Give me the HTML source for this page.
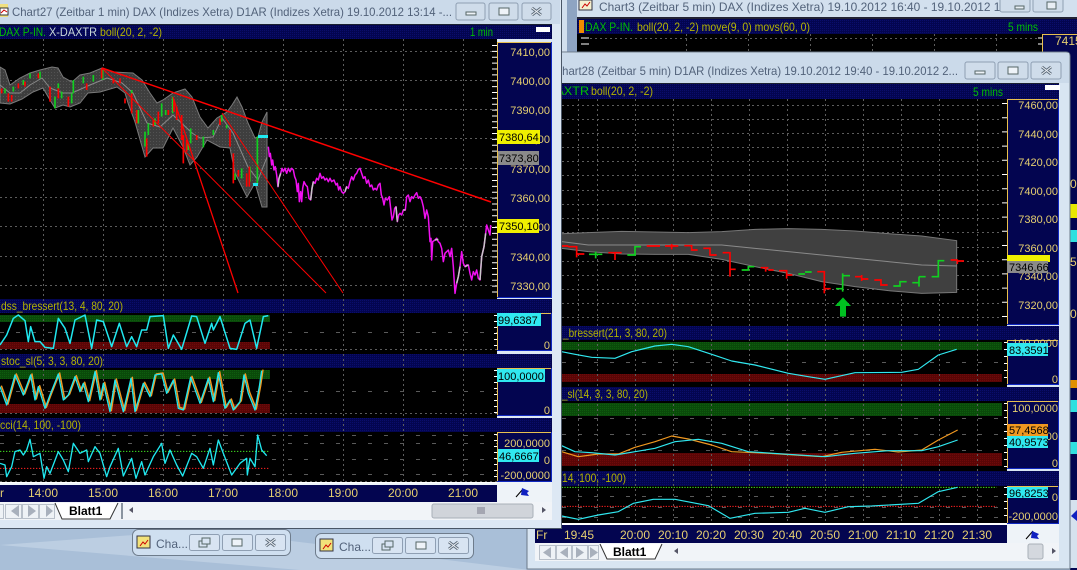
<!DOCTYPE html>
<html lang="de"><head><meta charset="utf-8"><title>Charts</title>
<style>
html,body{margin:0;padding:0;background:#a9bfd8;width:1077px;height:570px;overflow:hidden}
svg{display:block;font-family:"Liberation Sans",sans-serif}
.ax{fill:#e6cf70;font-size:11px;text-anchor:end}
.tm{fill:#e6cf70;font-size:12px;text-anchor:middle}
.bl{fill:#b4b400;font-size:12px}
.gr{fill:#00c000;font-size:12px}
.k{fill:#000;font-size:11px}
.b{fill:#000;font-size:12px;font-weight:700}
.ti{fill:#52627a;font-size:12px}
.g{stroke:#5c5c5c;stroke-dasharray:2 3;fill:none}
.d{stroke:#5a5a5a;stroke-dasharray:4 12;fill:none}
.ln{fill:none;stroke-linejoin:round}
.nb{fill:#d8e4f2;stroke:#8f9fb3}
.x{stroke:#5d6b7a;stroke-width:3;fill:none}
.x2{stroke:#eef3f8;stroke-width:1;fill:none}
</style></head><body>
<svg width="1077" height="570" viewBox="0 0 1077 570" xmlns="http://www.w3.org/2000/svg">
<defs>
<pattern id="nv" width="2" height="2" patternUnits="userSpaceOnUse"><rect width="2" height="2" fill="#030550"/><rect width="1" height="1" fill="#0a0d6c"/></pattern>
<pattern id="gb" width="2" height="2" patternUnits="userSpaceOnUse"><rect width="2" height="2" fill="#0a4a0a"/><rect width="1" height="1" fill="#0e5c0e"/></pattern>
<pattern id="rb" width="2" height="2" patternUnits="userSpaceOnUse"><rect width="2" height="2" fill="#5a0606"/><rect width="1" height="1" fill="#6e0a0a"/></pattern>
<pattern id="bd" width="3" height="3" patternUnits="userSpaceOnUse"><rect width="3" height="3" fill="#3e3e3e"/><rect width="1" height="1" fill="#525252"/></pattern>
</defs>

<!-- desktop -->
<rect width="1077" height="570" fill="#a9bfd8"/>
<path d="M0 545 L200 530 L530 570 L300 570Z" fill="#bccee2"/>

<!-- Chart3 behind -->
<rect x="562" y="0" width="515" height="52" fill="#d3e0ee"/>
<rect x="567" y="0" width="10" height="60" fill="#8ea4c2"/>
<text x="599" y="11" class="ti" textLength="418" lengthAdjust="spacingAndGlyphs">Chart3 (Zeitbar 5 min)  DAX (Indizes Xetra) 19.10.2012 16:40 - 19.10.2012 17...</text>
<rect x="579" y="0" width="13" height="10" fill="#f4f0d0" stroke="#334"/>
<path d="M582 8l3-4 2 2 3-4" stroke="#c00" fill="none"/>
<rect x="1000" y="-5" width="30" height="17" rx="2" fill="#cfdcea" stroke="#8f9fb3"/>
<rect x="1033" y="-5" width="30" height="17" rx="2" fill="#cfdcea" stroke="#8f9fb3"/>
<rect x="1015" y="6" width="9" height="3" fill="#e8eef4" stroke="#566"/>
<rect x="1047" y="2" width="9" height="7" fill="#e8eef4" stroke="#566"/>
<rect x="577" y="17" width="500" height="2" fill="#223"/>
<rect x="577" y="19" width="500" height="15" fill="url(#nv)"/>
<rect x="579" y="20" width="5" height="13" fill="#f08c00"/>
<text x="585" y="31" class="gr" textLength="48" lengthAdjust="spacingAndGlyphs">DAX P-IN.</text>
<text x="637" y="31" class="bl" textLength="173" lengthAdjust="spacingAndGlyphs">boll(20, 2, -2) move(9, 0) movs(60, 0)</text>
<text x="1008" y="31" class="gr" textLength="30" lengthAdjust="spacingAndGlyphs">5 mins</text>
<rect x="577" y="34" width="465" height="18" fill="#000"/>
<path d="M581 38h8M581 44h8M1038 38h4M1038 44h4" stroke="#fff"/>
<path class="g" d="M686.500 34v18M748.500 34v18M810.500 34v18M872.500 34v18M934.500 34v18M996.500 34v18"/>
<path class="g" d="M590 38.500h450"/>
<rect x="1042" y="34" width="35" height="20" fill="#030550"/>
<path d="M1042.500 52V34.500H1077" stroke="#e8c050" fill="none"/>
<text x="1055" y="45" fill="#e6cf70" font-size="12">7415</text>
<!-- chart3 visible strip at right -->
<rect x="1070" y="52" width="7" height="518" fill="#030550"/>
<text x="1070" y="188" fill="#e6cf70" font-size="12">0</text>
<rect x="1070" y="204" width="7" height="14" fill="#e8e800"/>
<text x="1070" y="266" fill="#e6cf70" font-size="12">5</text>
<rect x="1070" y="230" width="7" height="12" fill="#30e0e0"/>
<text x="1070" y="318" fill="#e6cf70" font-size="12">0</text>
<rect x="1070" y="380" width="7" height="8" fill="#e09000"/>
<rect x="1070" y="400" width="7" height="12" fill="#30e0e0"/>
<rect x="1070" y="442" width="7" height="12" fill="#30e0e0"/>
<rect x="1070" y="500" width="7" height="68" fill="#d6e2ee"/>
<path d="M1077 510l-6 6 6 5z" fill="#1020c0"/>

<!-- Chart28 window -->
<path d="M527 569V56q0-4 4-4H1066q4 0 4 4V569Z" fill="#d8e5f2" stroke="#6c7a8a" stroke-width="1"/>
<rect x="528" y="53" width="541" height="30" fill="#cbdaea"/>
<text x="554" y="75" class="ti" textLength="404" lengthAdjust="spacingAndGlyphs">Chart28 (Zeitbar 5 min)  D1AR (Indizes Xetra) 19.10.2012 19:40 - 19.10.2012 2...</text>
<g fill="#cfdcea" stroke="#8f9fb3">
<rect x="965" y="62" width="30" height="17" rx="2"/>
<rect x="998" y="62" width="30" height="17" rx="2"/>
<rect x="1031" y="62" width="30" height="17" rx="2"/>
</g>
<rect x="975" y="71" width="10" height="3" fill="#eef3f8" stroke="#566"/>
<rect x="1008" y="67" width="10" height="7" fill="#eef3f8" stroke="#566"/>
<path class="x" d="M1042 67l9 7m0-7l-9 7"/><path class="x2" d="M1042 67l9 7m0-7l-9 7"/>
<rect x="535" y="83" width="524" height="1" fill="#1a2030"/>
<rect x="535" y="84" width="524" height="15" fill="url(#nv)"/>
<rect x="1045" y="85" width="15" height="5" fill="#fff"/>
<text x="534" y="95" class="gr" textLength="55" lengthAdjust="spacingAndGlyphs">X-DAXTR</text>
<text x="591" y="95" class="bl" textLength="62" lengthAdjust="spacingAndGlyphs">boll(20, 2, -2)</text>
<text x="973" y="96" class="gr" textLength="30" lengthAdjust="spacingAndGlyphs">5 mins</text>
<rect x="535" y="99" width="472" height="227" fill="#000"/>
<!-- panels -->
<rect x="535" y="326" width="524" height="14" fill="url(#nv)"/>
<rect x="535" y="340" width="472" height="47" fill="#000"/>
<rect x="535" y="387" width="524" height="14" fill="url(#nv)"/>
<rect x="535" y="401" width="472" height="70" fill="#000"/>
<rect x="535" y="471" width="524" height="15" fill="url(#nv)"/>
<rect x="535" y="486" width="472" height="37" fill="#000"/>
<rect x="562" y="342" width="440" height="8" fill="url(#gb)"/>
<rect x="562" y="374" width="440" height="8" fill="url(#rb)"/>
<rect x="562" y="403" width="440" height="13" fill="url(#gb)"/>
<rect x="562" y="453" width="440" height="13" fill="url(#rb)"/>
<path class="g" d="M578.500 99v424M597.500 99v424M635.500 99v424M673.500 99v424M711.500 99v424M749.500 99v424M787.500 99v424M825.500 99v424M863.500 99v424M901.500 99v424M939.500 99v424M977.500 99v424"/>
<path class="g" d="M562 105.500h440M562 119.500h440M562 133.500h440M562 147.500h440M562 161.500h440M562 175.500h440M562 190.500h440M562 204.500h440M562 218.500h440M562 232.500h440M562 247.500h440M562 261.500h440M562 275.500h440M562 289.500h440M562 303.500h440M562 317.500h440"/>
<path class="d" d="M562 362.500h440M562 418.500h440M562 434.500h440M562 450.500h440M562 496.500h440M562 507.500h440M562 517.500h440"/>
<!-- right axis ticks -->
<line x1="1004.500" x2="1004.500" y1="103" y2="322" stroke="#fff" stroke-width="5" stroke-dasharray="1 13.200"/>
<line x1="1005.500" x2="1005.500" y1="342" y2="382" stroke="#fff" stroke-width="3" stroke-dasharray="1 6"/>
<line x1="1005.500" x2="1005.500" y1="403" y2="467" stroke="#fff" stroke-width="3" stroke-dasharray="1 6"/>
<line x1="1005.500" x2="1005.500" y1="487" y2="522" stroke="#fff" stroke-width="3" stroke-dasharray="1 6"/>
<!-- bollinger -->
<g transform="translate(555 220) scale(.33333)">
<path d="M0 42L100 38 200 34 300 36 400 38 500 35 600 28 700 26 800 28 900 33 1000 41 1100 48 1205 62V217L1100 220 1000 212 900 200 800 185 700 160 600 140 500 118 400 103 300 103 200 102 100 95 20 85 0 80Z" fill="url(#bd)" stroke="#777" stroke-width="3"/>
<polyline class="ln" stroke="#8a8a8a" stroke-width="3" points="20,65 100,75 300,75 500,75 600,85 800,105 1000,125 1100,135 1205,138"/>
<path fill="none" stroke="#ff0000" stroke-width="5" d="M20 78h20M40 80h25V112M65 102h23M160 98h40M180 98v22M275 78h40M330 78h40M350 72v16M388 77h22v13h18M445 85h20v20h20M503 98h22v72M525 148h17M617 143h23M632 143v12M640 150h16M672 152h23v24M695 165h17M787 155h21v65M808 206h19M900 170h20M920 165v18M920 177h20M958 180h20v15h20M1187 120h20M1207 118v14M1207 123h20"/>
<path fill="none" stroke="#10d020" stroke-width="5" d="M102 103h40M122 95v20M217 105h23V80h18M560 150h20V140h18M730 162h20M750 156h20M843 206h20M863 160v55M863 167h22M1015 198h20V185h20M1072 188h20M1092 170v30M1092 170h20M1130 170h20V122h18"/>
<path d="M864 232l24 26h-15v32h-18v-32h-15z" fill="#00c020"/>
<polyline class="ln" stroke="#30e8f0" stroke-width="3.500" points="20,395 60,403 110,412 180,415 230,395 300,378 350,373 400,380 470,403 530,423 600,435 700,460 760,470 810,478 900,458 1040,457 1090,448 1150,405 1205,388"/>
</g>
<g transform="translate(555 390) scale(.33333)">
<polyline class="ln" stroke="#f09820" stroke-width="3.500" points="20,185 70,200 130,192 190,192 240,172 300,155 350,138 400,147 470,165 530,185 640,190 720,195 800,200 860,187 960,178 1030,186 1100,180 1150,150 1208,120"/>
<polyline class="ln" stroke="#30e8f0" stroke-width="3.500" points="20,167 60,185 110,188 180,195 240,185 300,175 360,155 430,148 500,160 580,185 700,193 810,200 900,190 1000,182 1100,182 1150,170 1208,150"/>
<path d="M20 292H1325" stroke="#40e020" stroke-width="3" stroke-dasharray="4 4"/>
<path d="M20 349H1325" stroke="#ff2020" stroke-width="3" stroke-dasharray="4 4"/>
<polyline class="ln" stroke="#30e8f0" stroke-width="3.500" points="20,378 70,388 130,375 190,365 235,340 295,328 360,328 460,347 525,385 600,370 700,367 750,355 810,367 880,350 950,348 1090,340 1150,305 1208,292"/>
</g>
<!-- axis boxes -->
<g fill="#030550" stroke="#1028c0">
<rect x="1007.500" y="99.500" width="51" height="225"/>
<rect x="1007.500" y="340.500" width="51" height="44"/>
<rect x="1007.500" y="401.500" width="51" height="67"/>
<rect x="1007.500" y="486.500" width="51" height="37"/>
</g>
<path d="M1007.500 324V99.500H1058M1007.500 384V340.500H1058M1007.500 468V401.500H1058M1007.500 523V486.500H1058" stroke="#e8c050" fill="none"/>
<text x="1058" y="109" class="ax">7460,00</text>
<text x="1058" y="138" class="ax">7440,00</text>
<text x="1058" y="166" class="ax">7420,00</text>
<text x="1058" y="195" class="ax">7400,00</text>
<text x="1058" y="223" class="ax">7380,00</text>
<text x="1058" y="252" class="ax">7360,00</text>
<text x="1058" y="280" class="ax">7340,00</text>
<text x="1058" y="309" class="ax">7320,00</text>
<rect x="1007" y="255" width="43" height="7" fill="#f0f000"/>
<rect x="1007" y="261" width="41" height="12" fill="#8a8a8a"/>
<text x="1009" y="271" class="k">7346,66</text>
<text x="1058" y="347" class="ax">100,0000</text>
<rect x="1007" y="343" width="41" height="13" fill="#30e8f0"/>
<text x="1009" y="354" class="k">83,3591</text>
<text x="1058" y="383" class="ax">0</text>
<text x="1058" y="412" class="ax">100,0000</text>
<text x="1058" y="440" class="ax">50,0000</text>
<rect x="1007" y="424" width="41" height="12" fill="#f09820"/>
<text x="1009" y="434" class="k">57,4568</text>
<rect x="1007" y="436" width="41" height="12" fill="#30e8f0"/>
<text x="1009" y="446" class="k">40,9573</text>
<text x="1058" y="467" class="ax">0</text>
<text x="1058" y="501" class="ax">0</text>
<text x="1058" y="520" class="ax">-200,0000</text>
<rect x="1007" y="487" width="41" height="11" fill="#30e8f0"/>
<text x="1009" y="497" class="k">96,8253</text>
<text x="563" y="337" class="bl" textLength="104" lengthAdjust="spacingAndGlyphs">_bressert(21, 3, 80, 20)</text>
<text x="562" y="398" class="bl" textLength="86" lengthAdjust="spacingAndGlyphs">_sl(14, 3, 3, 80, 20)</text>
<text x="562" y="482" class="bl" textLength="64" lengthAdjust="spacingAndGlyphs">14, 100, -100)</text>
<!-- time bar -->
<rect x="535" y="523" width="472" height="2" fill="#fff"/>
<rect x="535" y="525" width="472" height="18" fill="#030550"/>
<rect x="1007" y="524" width="52" height="19" fill="#eef3f8"/>
<path d="M1026 539l7-8" stroke="#000"/><path d="M1032 531l7 3-2 2 2 3-8-1z" fill="#1020c0"/>
<text x="536" y="539" fill="#e6cf70" font-size="12">Fr</text>
<g><text class="tm" x="579" y="539">19:45</text><text class="tm" x="635" y="539">20:00</text><text class="tm" x="673" y="539">20:10</text><text class="tm" x="711" y="539">20:20</text><text class="tm" x="749" y="539">20:30</text><text class="tm" x="787" y="539">20:40</text><text class="tm" x="825" y="539">20:50</text><text class="tm" x="863" y="539">21:00</text><text class="tm" x="901" y="539">21:10</text><text class="tm" x="939" y="539">21:20</text><text class="tm" x="977" y="539">21:30</text></g>
<!-- tab row -->
<rect x="535" y="543" width="524" height="18" fill="#f1f4f8"/>
<g fill="#eef2f6" stroke="#b8c0ca"><rect x="539.500" y="545.500" width="16" height="14"/><rect x="556.500" y="545.500" width="15" height="14"/><rect x="572.500" y="545.500" width="15" height="14"/><rect x="588.500" y="545.500" width="10" height="14"/></g>
<g fill="#a8b0bc">
<path d="M551 547v11l-8-5.500zM568 547v11l-8-5.500zM576 547l8 5.500-8 5.500zM590 547l8 5.500-8 5.500z" />
</g>
<path d="M600 544l7 15h48l7-15" fill="#fff" stroke="#333"/>
<text x="613" y="556" class="b">Blatt1</text>
<path d="M678 548v6l-4-3z" fill="#556"/><path d="M1052 548v6l4-3z" fill="#556"/>
<rect x="1028" y="544" width="15" height="15" rx="2" fill="#d4d8de" stroke="#a9b0b8"/>

<!-- Left window -->
<rect x="0" y="0" width="562" height="529" fill="#dde8f4"/>
<path d="M561.500 0V528.500H0" stroke="#4a5666" fill="none"/>
<rect x="0" y="0" width="560" height="24" fill="#cbdaea"/>
<rect x="0" y="4" width="8" height="13" fill="#f0e080"/><rect x="0" y="8" width="8" height="7" fill="#fff" stroke="#333"/><path d="M1 13l3-3 3 2" stroke="#c00" fill="none"/>
<text x="12" y="16" class="ti" textLength="440" lengthAdjust="spacingAndGlyphs">Chart27 (Zeitbar 1 min)  DAX (Indizes Xetra) D1AR (Indizes Xetra) 19.10.2012 13:14 -...</text>
<g fill="#cfdcea" stroke="#8f9fb3">
<rect x="456" y="3" width="29" height="17" rx="2"/>
<rect x="489" y="3" width="29" height="17" rx="2"/>
<rect x="522" y="3" width="29" height="17" rx="2"/>
</g>
<rect x="466" y="12" width="10" height="3" fill="#eef3f8" stroke="#566"/>
<rect x="499" y="8" width="10" height="7" fill="#eef3f8" stroke="#566"/>
<path class="x" d="M532 8l9 7m0-7l-9 7"/><path class="x2" d="M532 8l9 7m0-7l-9 7"/>
<rect x="0" y="24" width="552" height="1" fill="#1a2030"/>
<rect x="0" y="25" width="552" height="14" fill="url(#nv)"/>
<rect x="536" y="27" width="14" height="5" fill="#fff"/>
<text x="-1" y="36" class="gr" textLength="47" lengthAdjust="spacingAndGlyphs">DAX P-IN.</text>
<text x="49" y="36" fill="#c8d8d8" font-size="12" textLength="48" lengthAdjust="spacingAndGlyphs">X-DAXTR</text>
<text x="100" y="36" class="bl" textLength="62" lengthAdjust="spacingAndGlyphs">boll(20, 2, -2)</text>
<text x="470" y="36" class="gr" textLength="23" lengthAdjust="spacingAndGlyphs">1 min</text>
<rect x="0" y="39" width="497" height="260" fill="#000"/>
<rect x="0" y="299" width="552" height="14" fill="url(#nv)"/>
<rect x="0" y="313" width="497" height="41" fill="#000"/>
<rect x="0" y="354" width="552" height="14" fill="url(#nv)"/>
<rect x="0" y="368" width="497" height="50" fill="#000"/>
<rect x="0" y="418" width="552" height="14" fill="url(#nv)"/>
<rect x="0" y="432" width="497" height="51" fill="#000"/>
<rect x="0" y="315" width="270" height="7" fill="url(#gb)"/>
<rect x="0" y="342" width="270" height="7" fill="url(#rb)"/>
<rect x="0" y="370" width="270" height="9" fill="url(#gb)"/>
<rect x="0" y="404" width="270" height="9" fill="url(#rb)"/>
<path class="g" d="M43.500 39v444M103.500 39v444M163.500 39v444M223.500 39v444M283.500 39v444M343.500 39v444M403.500 39v444M463.500 39v444"/>
<path class="g" d="M0 51.500h497M0 80.500h497M0 109.500h497M0 138.500h497M0 168.500h497M0 197.500h497M0 226.500h497M0 256.500h497M0 285.500h497"/>
<path class="g" d="M0 349.500h497M0 413.500h497M0 481.500h497"/>
<path class="d" d="M0 332.500h497M0 391.500h497M0 435.500h497M0 443.500h497M0 459.500h497M0 474.500h497"/>
<!-- main band -->
<path d="M0 67L5 70 10 85 20 78 30 73 40 70 52 67 58 68 63 77 72 82 80 75 90 73 102 68 113 72 133 73 142 80 150 93 157 103 163 100 173 93 185 89 192 97 200 117 208 128 217 118 227 112 232 105 237 97 242 107 248 123 255 138 258 137 262 122 267 112V207H262L255 183 247 197 235 173 230 148 220 147 207 140 197 157 190 165 183 147 173 128 163 148 153 148 145 157 135 122 128 103 125 93 117 87 100 92 88 93 80 103 70 107 63 105 55 108 50 100 43 88 33 92 22 99 10 104 0 103Z" fill="url(#bd)" stroke="#7a7a7a"/>
<polyline class="ln" stroke="#8a8a8a" points="0,85 10,93 20,93 30,85 42,78 50,88 63,93 72,93 90,85 107,78 122,83 133,93 147,123 160,127 173,115 192,133 200,138 213,137 222,118 233,133 248,167 258,180 267,157"/>
<g transform="translate(0 60) scale(.33333)" fill="none" stroke-width="5">
<path stroke="#10d020" d="M15 85V100M40 80V95M70 60V75M90 40V55M120 35V55M165 110V145M185 95V115M175 70V95M215 100V130M220 60V100M250 50V70M280 45V65M308 30V60M395 90V125M415 150V190M435 215V260M445 190V225M465 175V195M485 130V170M497 150V165M518 110V160M565 250V270M572 205V250M610 230V240M640 210V225M610 240V262M665 165V185M680 195V205M705 340V360M725 325V355M750 320V365M772 230V370"/>
<path stroke="#f00" d="M5 85V100M25 100V125M35 105V125M55 70V85M75 65V80M115 40V55M150 80V125M175 85V115M205 110V140M260 70V90M305 25V55M340 55V70M360 55V70M375 115V130M395 100V160M410 150V190M440 235V290M460 180V200M475 155V190M505 150V165M522 120V155M530 140V180M545 165V240M550 225V310M560 240V275M590 225V240M660 175V195M690 210V260M700 280V370M715 330V350M740 340V380M748 320V380"/>
</g>
<g fill="none" stroke="#f00">
<path d="M102 68L491 202" stroke-width="1.500"/>
<path d="M102 68L326 293"/>
<path d="M173 97L238 293" stroke-width="1.300"/>
<path d="M222 113L343 293"/>
</g>
<rect x="258" y="135" width="10" height="3" fill="#20e8f0"/>
<rect x="253" y="183" width="5" height="3" fill="#20e8f0"/>
<!-- price line -->
<g transform="translate(260 120) scale(.33333)" class="ln">
<polyline stroke="#f010f0" stroke-width="4.500" points="25,80 28,110 31,100 35,135 38,120 42,150 46,140 50,165 54,200 57,175 62,160 66,145 70,155 75,145 80,160 85,145 90,155 95,145 100,150 104,170 108,180 112,215 115,190 118,245 122,215 125,245 128,205 132,185 137,195 142,200 147,235 152,240 156,205 160,185 165,190 170,175 175,180 180,160 185,175 190,170 195,180 200,175 205,185 210,175 215,185 222,180 228,195 232,190 236,210 240,200 245,215 250,220 255,215 260,200 265,205 270,185 275,170 280,180 285,165 290,160 295,148 300,145 305,160 310,175 315,170 320,190 325,180 330,200 335,195 340,210 345,205 350,210 355,195 360,190 364,225 368,235 372,255 376,235 382,240 388,230 392,265 396,300 400,290 404,265 408,260 412,305 416,285 420,280 425,285 430,270 436,270 440,230 445,225 450,245 455,230 460,235 465,225 470,218 475,235 480,230 485,240 490,260 495,295 500,270 505,290 510,365 513,355 515,420 518,365 525,360 530,355 535,365 540,370 545,385 550,425 555,400 560,395 565,390 570,410 575,385 580,440 585,520 590,490 595,470 600,440 605,395 610,430 615,440 620,435 625,435 630,460 635,480 640,455 645,465 650,450 655,475 660,480 665,410 672,380 677,340 680,315 685,330 690,345 692,315"/>
<path stroke="#c8c8c8" stroke-width="4.500" d="M54 200L57 175 62 160M152 240L156 205 160 185M408 260L412 305M430 270L436 270M590 490L595 470 600 440M615 440L625 435M660 480L665 410 672 380 677 340M525 360L535 358M255 215L260 200"/>
</g>
<!-- osc lines -->
<polyline class="ln" transform="translate(0 160) scale(.33333)" stroke="#20e8f0" stroke-width="4.500" points="0,555 20,525 30,500 40,475 55,465 75,482 85,545 92,500 105,545 120,545 135,562 160,565 175,475 195,505 210,550 225,480 255,465 275,565 290,480 310,485 335,560 358,490 380,560 395,530 410,560 425,510 440,510 450,470 490,467 505,565 520,525 545,568 575,468 590,470 615,550 635,490 640,510 660,470 690,565 710,568 735,490 750,480 770,565 790,470 805,467"/>
<g transform="translate(0 350) scale(.33333)" class="ln">
<polyline transform="translate(4 -3)" stroke="#f09820" stroke-width="4.500" points="0,110 20,165 45,75 70,135 92,75 105,150 115,110 135,175 150,135 175,72 190,150 205,135 225,80 240,125 250,100 265,155 285,65 300,150 310,100 330,185 345,90 370,185 393,85 405,185 430,100 450,140 465,75 485,72 500,130 520,90 535,175 550,180 572,82 600,160 625,85 640,155 655,68 675,175 690,150 700,180 720,155 732,75 745,130 765,180 778,110 785,62"/>
<polyline stroke="#20e8f0" stroke-width="4" points="0,110 20,165 45,75 70,135 92,75 105,150 115,110 135,175 150,135 175,72 190,150 205,135 225,80 240,125 250,100 265,155 285,65 300,150 310,100 330,185 345,90 370,185 393,85 405,185 430,100 450,140 465,75 485,72 500,130 520,90 535,175 550,180 572,82 600,160 625,85 640,155 655,68 675,175 690,150 700,180 720,155 732,75 745,130 765,180 778,110 785,62"/>
<path d="M0 304H810" stroke="#40e020" stroke-width="3" stroke-dasharray="4 5"/>
<path d="M0 355H810" stroke="#ff2020" stroke-width="3" stroke-dasharray="4 5"/>
<polyline stroke="#20e8f0" stroke-width="4" points="0,340 15,345 20,380 35,350 45,305 60,300 70,315 80,300 90,268 100,320 120,310 132,385 140,350 150,370 175,305 190,330 205,365 220,280 240,310 260,300 265,335 285,290 300,310 320,380 330,350 355,295 370,378 395,325 408,385 425,335 435,375 460,320 485,280 495,340 510,300 530,345 548,378 575,310 590,320 610,355 630,295 640,345 655,270 670,310 695,375 720,340 740,325 742,375 750,325 765,350 773,255 785,300 800,317"/>
</g>
<!-- axis left -->
<line x1="494.500" x2="494.500" y1="45" y2="297" stroke="#fff" stroke-width="5" stroke-dasharray="1 4.870"/>
<line x1="495.500" x2="495.500" y1="315" y2="350" stroke="#fff" stroke-width="3" stroke-dasharray="1 5"/>
<line x1="495.500" x2="495.500" y1="370" y2="414" stroke="#fff" stroke-width="3" stroke-dasharray="1 5"/>
<line x1="495.500" x2="495.500" y1="434" y2="481" stroke="#fff" stroke-width="3" stroke-dasharray="1 5"/>
<g fill="#030550" stroke="#1028c0">
<rect x="497.500" y="42.500" width="54" height="255"/>
<rect x="497.500" y="313.500" width="54" height="37"/>
<rect x="497.500" y="368.500" width="54" height="47"/>
<rect x="497.500" y="432.500" width="54" height="49"/>
</g>
<path d="M497.500 297V42.500H551M497.500 350V313.500H551M497.500 415V368.500H551M497.500 481V432.500H551" stroke="#e8c050" fill="none"/>
<text x="550" y="56" class="ax">7410,00</text>
<text x="550" y="85" class="ax">7400,00</text>
<text x="550" y="114" class="ax">7390,00</text>
<text x="550" y="143" class="ax">7380,00</text>
<text x="550" y="173" class="ax">7370,00</text>
<text x="550" y="202" class="ax">7360,00</text>
<text x="550" y="231" class="ax">7350,00</text>
<text x="550" y="261" class="ax">7340,00</text>
<text x="550" y="290" class="ax">7330,00</text>
<rect x="497" y="130" width="43" height="14" fill="#f0f000"/>
<text x="499" y="141" class="k">7380,64</text>
<rect x="498" y="151" width="41" height="14" fill="#8a8a8a"/>
<text x="499" y="162" class="k">7373,80</text>
<rect x="497" y="219" width="42" height="14" fill="#f0f000"/>
<text x="499" y="230" class="k">7350,10</text>
<rect x="497" y="313" width="44" height="13" fill="#30e8f0"/>
<text x="498" y="324" class="k">99,6387</text>
<text x="550" y="349" class="ax">0</text>
<rect x="497" y="369" width="48" height="13" fill="#30e8f0"/>
<text x="498" y="380" class="k">100,0000</text>
<text x="550" y="414" class="ax">0</text>
<text x="550" y="447" class="ax">200,0000</text>
<text x="550" y="464" class="ax">0</text>
<rect x="498" y="449" width="41" height="13" fill="#30e8f0"/>
<text x="499" y="460" class="k">46,6667</text>
<text x="550" y="479" class="ax">-200,0000</text>
<text x="1" y="310" class="bl" textLength="122" lengthAdjust="spacingAndGlyphs">dss_bressert(13, 4, 80, 20)</text>
<text x="1" y="365" class="bl" textLength="102" lengthAdjust="spacingAndGlyphs">stoc_sl(5, 3, 3, 80, 20)</text>
<text x="0" y="429" class="bl" textLength="81" lengthAdjust="spacingAndGlyphs">cci(14, 100, -100)</text>
<!-- time bar left -->
<path d="M0 482.500H497M0 484H497" stroke="#fff"/>
<rect x="0" y="485" width="497" height="17" fill="#030550"/>
<rect x="497" y="482" width="55" height="20" fill="#eef3f8"/>
<path d="M516 497l7-8" stroke="#000"/><path d="M522 488l7 3-2 2 2 3-8-1z" fill="#1020c0"/>
<text x="0" y="497" fill="#e6cf70" font-size="12">r</text>
<text class="tm" x="43" y="497">14:00</text><text class="tm" x="103" y="497">15:00</text><text class="tm" x="163" y="497">16:00</text><text class="tm" x="223" y="497">17:00</text><text class="tm" x="283" y="497">18:00</text><text class="tm" x="343" y="497">19:00</text><text class="tm" x="403" y="497">20:00</text><text class="tm" x="463" y="497">21:00</text>
<!-- left tabs -->
<rect x="0" y="502" width="552" height="18" fill="#f1f4f8"/>
<g fill="#eef2f6" stroke="#b8c0ca"><rect x="-1.500" y="504.500" width="5" height="14"/><rect x="5.500" y="504.500" width="16" height="14"/><rect x="22.500" y="504.500" width="16" height="14"/><rect x="39.500" y="504.500" width="15" height="14"/></g>
<g fill="#a8b0bc"><path d="M19 505v12l-8-6zM28 505l8 6-8 6zM46 505l7 6-7 6z"/></g>
<path d="M55 503l7 16h48l8-16" fill="#fff" stroke="#333"/>
<path d="M122 503v16" stroke="#8a94a0" stroke-width="2"/>
<text x="69" y="515" class="b">Blatt1</text>
<path d="M133 507v6l-4-3z" fill="#556"/><path d="M542 507v6l4-3z" fill="#556"/>
<rect x="432" y="504" width="101" height="14" rx="2" fill="#d0d4da" stroke="#a9b0b8"/>
<path d="M478 507v7M480 507v7M482 507v7M484 507v7" stroke="#778"/>

<!-- task boxes -->
<g fill="#cfdff0" stroke="#6e7c8c">
<rect x="132.500" y="529.500" width="158" height="26" rx="6"/>
<rect x="315.500" y="533.500" width="158" height="25" rx="6"/>
</g>
<g>
<rect x="137" y="536" width="13" height="12" fill="#f2e27a" stroke="#334"/><path d="M140 546l3-4 2 2 3-4" stroke="#c00" fill="none"/>
<text x="156" y="548" class="ti">Cha...</text>
<rect x="189.500" y="534.500" width="30" height="16" rx="2" class="nb"/><rect x="222.500" y="534.500" width="30" height="16" rx="2" class="nb"/><rect x="255.500" y="534.500" width="30" height="16" rx="2" class="nb"/>
<rect x="199" y="541" width="8" height="6" fill="none" stroke="#566"/><rect x="202" y="538" width="8" height="6" fill="#d8e4f2" stroke="#566"/>
<rect x="232" y="539" width="10" height="7" fill="#eef3f8" stroke="#566"/>
<path class="x" d="M266 539l9 7m0-7l-9 7"/><path class="x2" d="M266 539l9 7m0-7l-9 7"/>
<rect x="320" y="539" width="13" height="12" fill="#f2e27a" stroke="#334"/><path d="M323 549l3-4 2 2 3-4" stroke="#c00" fill="none"/>
<text x="339" y="551" class="ti">Cha...</text>
<rect x="372.500" y="537.500" width="30" height="16" rx="2" class="nb"/><rect x="405.500" y="537.500" width="30" height="16" rx="2" class="nb"/><rect x="438.500" y="537.500" width="30" height="16" rx="2" class="nb"/>
<rect x="382" y="544" width="8" height="6" fill="none" stroke="#566"/><rect x="385" y="541" width="8" height="6" fill="#d8e4f2" stroke="#566"/>
<rect x="416" y="542" width="10" height="7" fill="#eef3f8" stroke="#566"/>
<path class="x" d="M449 542l9 7m0-7l-9 7"/><path class="x2" d="M449 542l9 7m0-7l-9 7"/>
</g>
</svg>
</body></html>
